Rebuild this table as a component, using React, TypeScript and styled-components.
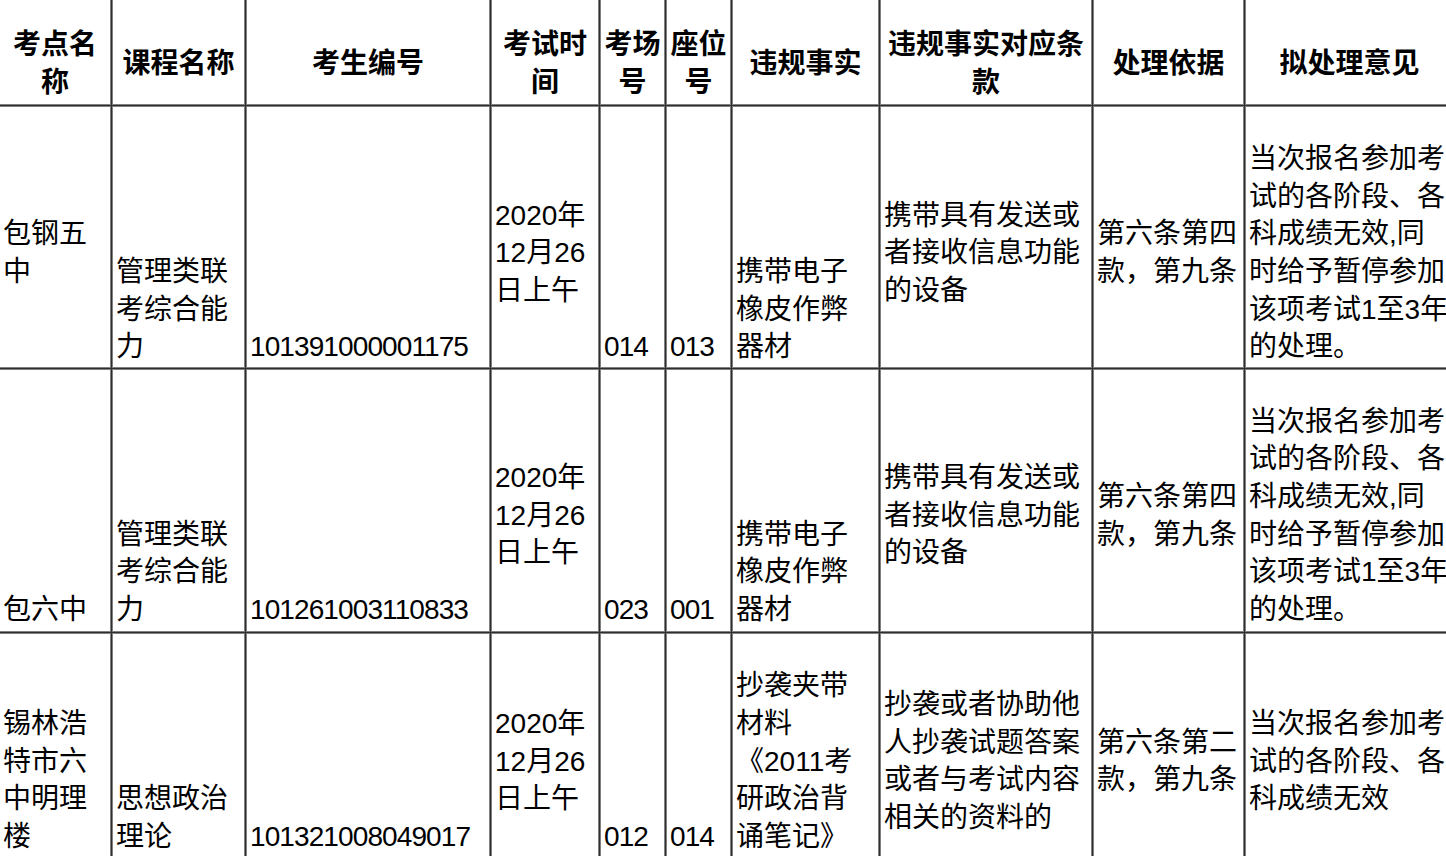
import styled, { createGlobalStyle } from 'styled-components';

const GlobalStyle = createGlobalStyle`
  html, body {
    margin: 0;
    padding: 0;
    overflow: hidden;
    background: #ffffff;
  }
`;

const widths = [112, 133, 244, 108, 65, 65, 147, 212, 151, 209];

const Table = styled.table`
  table-layout: fixed;
  width: 1457px;
  margin: -8px 0 0 -2px;
  border-collapse: separate;
  border-spacing: 1px;
  background: #2e2e2e;
  font-family: "Liberation Sans", "Noto Sans CJK SC", sans-serif;
  font-size: 28px;
  line-height: 37.6px;
  color: #000000;
`;

const HeadCell = styled.th<{ $w: number }>`
  box-sizing: border-box;
  width: ${(p) => p.$w}px;
  padding: 32px 3px 3px 3px;
  border: 1px solid #808080;
  background: #ffffff;
  font-weight: 700;
  text-align: center;
  vertical-align: middle;
`;

const Row = styled.tr<{ $pb: number }>`
  & > td {
    padding-bottom: ${(p) => p.$pb}px;
  }
`;

const Cell = styled.td<{ $align: 'middle' | 'bottom'; $num?: boolean }>`
  box-sizing: border-box;
  padding: 33px 3px 1px 3px;
  border: 1px solid #808080;
  background: #ffffff;
  text-align: left;
  vertical-align: ${(p) => p.$align};
  letter-spacing: ${(p) => (p.$num ? '-0.9px' : 'normal')};
`;

const headers = [
  '考点名称',
  '课程名称',
  '考生编号',
  '考试时间',
  '考场号',
  '座位号',
  '违规事实',
  '违规事实对应条款',
  '处理依据',
  '拟处理意见',
];

type Align = 'middle' | 'bottom';
type CellData = [string, Align];

const PENALTY_LONG = '当次报名参加考试的各阶段、各科成绩无效,同时给予暂停参加该项考试1至3年的处理。';

const rows: { pb: number; cells: CellData[] }[] = [
  {
    pb: 1,
    cells: [
      ['包钢五中', 'middle'],
      ['管理类联考综合能力', 'bottom'],
      ['101391000001175', 'bottom'],
      ['2020年12月26日上午', 'middle'],
      ['014', 'bottom'],
      ['013', 'bottom'],
      ['携带电子橡皮作弊器材', 'bottom'],
      ['携带具有发送或者接收信息功能的设备', 'middle'],
      ['第六条第四款，第九条', 'middle'],
      [PENALTY_LONG, 'middle'],
    ],
  },
  {
    pb: 3,
    cells: [
      ['包六中', 'bottom'],
      ['管理类联考综合能力', 'bottom'],
      ['101261003110833', 'bottom'],
      ['2020年12月26日上午', 'middle'],
      ['023', 'bottom'],
      ['001', 'bottom'],
      ['携带电子橡皮作弊器材', 'bottom'],
      ['携带具有发送或者接收信息功能的设备', 'middle'],
      ['第六条第四款，第九条', 'middle'],
      [PENALTY_LONG, 'middle'],
    ],
  },
  {
    pb: 1,
    cells: [
      ['锡林浩特市六中明理楼', 'bottom'],
      ['思想政治理论', 'bottom'],
      ['101321008049017', 'bottom'],
      ['2020年12月26日上午', 'middle'],
      ['012', 'bottom'],
      ['014', 'bottom'],
      ['抄袭夹带材料《2011考研政治背诵笔记》', 'bottom'],
      ['抄袭或者协助他人抄袭试题答案或者与考试内容相关的资料的', 'middle'],
      ['第六条第二款，第九条', 'middle'],
      ['当次报名参加考试的各阶段、各科成绩无效', 'middle'],
    ],
  },
];

const isNumeric = (s: string) => /^\d+$/.test(s);

export default function App() {
  return (
    <>
      <GlobalStyle />
      <Table>
        <thead>
          <tr>
            {headers.map((h, i) => (
              <HeadCell key={h} $w={widths[i]}>
                {h}
              </HeadCell>
            ))}
          </tr>
        </thead>
        <tbody>
          {rows.map((row, r) => (
            <Row key={r} $pb={row.pb}>
              {row.cells.map(([text, align], c) => (
                <Cell key={c} $align={align} $num={isNumeric(text)}>
                  {text}
                </Cell>
              ))}
            </Row>
          ))}
        </tbody>
      </Table>
    </>
  );
}
